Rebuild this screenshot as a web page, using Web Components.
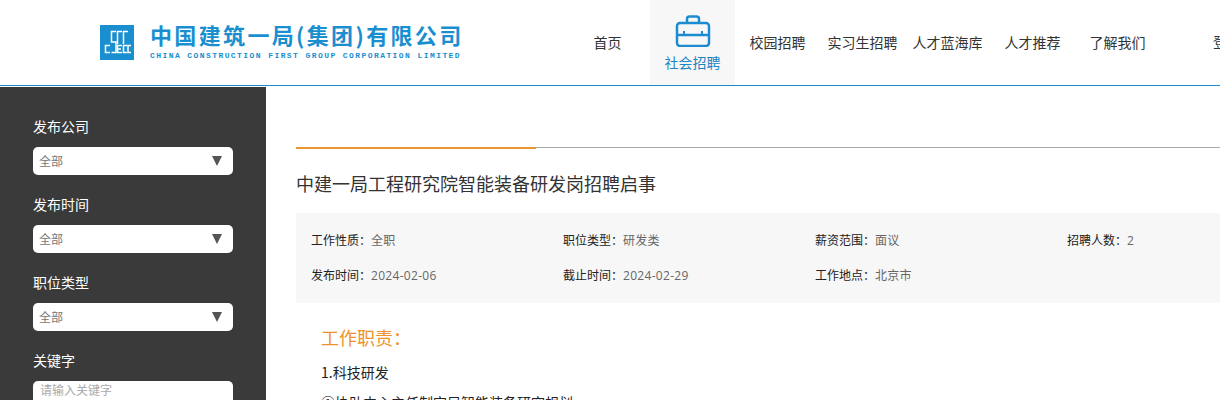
<!DOCTYPE html>
<html lang="zh">
<head>
<meta charset="utf-8">
<title>中建一局工程研究院智能装备研发岗招聘启事</title>
<style>
  html, body { margin: 0; height: 400px; overflow: hidden; background: #fff; }
  body { font-family: "Noto Sans CJK SC", "Liberation Sans", sans-serif; color: #333; }
</style>
</head>
<body>
<job-page>
  <site-header slot="header">
    <nav-item>首页</nav-item>
    <nav-item active>社会招聘</nav-item>
    <nav-item>校园招聘</nav-item>
    <nav-item>实习生招聘</nav-item>
    <nav-item>人才蓝海库</nav-item>
    <nav-item>人才推荐</nav-item>
    <nav-item>了解我们</nav-item>
    <span slot="login">登录</span>
  </site-header>
  <filter-bar slot="side">
    <filter-field label="发布公司" value="全部"></filter-field>
    <filter-field label="发布时间" value="全部"></filter-field>
    <filter-field label="职位类型" value="全部"></filter-field>
    <filter-field label="关键字" placeholder="请输入关键字"></filter-field>
  </filter-bar>
  <job-detail heading="中建一局工程研究院智能装备研发岗招聘启事">
    <info-item slot="info" label="工作性质">全职</info-item>
    <info-item slot="info" label="职位类型">研发类</info-item>
    <info-item slot="info" label="薪资范围">面议</info-item>
    <info-item slot="info" label="招聘人数">2</info-item>
    <info-item slot="info" label="发布时间">2024-02-06</info-item>
    <info-item slot="info" label="截止时间">2024-02-29</info-item>
    <info-item slot="info" label="工作地点">北京市</info-item>
    <h3 slot="section">工作职责：</h3>
    <p>1.科技研发</p>
    <p>①协助中心主任制定局智能装备研究规划</p>
  </job-detail>
</job-page>

<script>
class JobPage extends HTMLElement {
  constructor() {
    super();
    this.attachShadow({ mode: 'open' });
  }

  connectedCallback() {
    this.shadowRoot.innerHTML = `
      <style>
        :host { display: block; width: 1320px; }
        .body { display: flex; height: 313px; margin-top: 1px; overflow: hidden; }
      </style>
      <slot name="header"></slot>
      <div class="body">
        <slot name="side"></slot>
        <slot></slot>
      </div>
    `;
  }
}

class SiteHeader extends HTMLElement {
  constructor() {
    super();
    this.attachShadow({ mode: 'open' });
  }

  connectedCallback() {
    this.shadowRoot.innerHTML = `
      <style>
        :host {
          display: flex;
          height: 85px;
          border-bottom: 1px solid #1c8bc6;
          color: #333;
        }
        .logo {
          display: flex;
          align-items: flex-start;
          gap: 16px;
          width: 565px;
          padding-left: 100px;
          box-sizing: border-box;
          flex: none;
          color: #1a8fd0;
        }
        .logo svg { flex: none; margin-top: 25px; }
        .words { padding-top: 21px; }
        .name {
          font-size: 22px;
          font-weight: 700;
          line-height: 26px;
          letter-spacing: 2.35px;
          white-space: nowrap;
        }
        .name-en {
          font-family: "Liberation Mono", monospace;
          font-size: 8px;
          font-weight: 700;
          line-height: 10px;
          letter-spacing: 1.42px;
          white-space: nowrap;
          margin-top: 4px;
        }
        nav { display: flex; flex: none; }
        .login {
          font-size: 14px;
          line-height: 83px;
          margin-left: 53px;
          white-space: nowrap;
        }
      </style>
      <div class="logo">
        <svg width="34" height="35" viewBox="0 0 34 35">
          <rect width="34" height="35" fill="#1a8fd0"/>
          <g fill="none" stroke="#fff" stroke-width="1.5">
            <path d="M10 20.500H5.500v7H10"/>
            <path d="M16 6.500h-4.500V17H16v10.500h-4.500"/>
            <path d="M22 6.500h-4.500V19"/>
            <path d="M22 20.500h-4.500v7H22M17.500 24H21"/>
            <path d="M28 6.500h-4.500V19"/>
            <path d="M27 20.500h-3.500v7H27"/>
            <path d="M31 20.500h-3v7h3"/>
          </g>
        </svg>
        <div class="words">
          <div class="name">中国建筑一局(集团)有限公司</div>
          <div class="name-en">CHINA CONSTRUCTION FIRST GROUP CORPORATION LIMITED</div>
        </div>
      </div>
      <nav><slot></slot></nav>
      <div class="login"><slot name="login"></slot></div>
    `;
  }
}

class NavItem extends HTMLElement {
  constructor() {
    super();
    this.attachShadow({ mode: 'open' });
  }

  connectedCallback() {
    const active = this.hasAttribute('active');
    this.shadowRoot.innerHTML = `
      <style>
        :host {
          display: flex;
          flex-direction: column;
          align-items: center;
          justify-content: center;
          width: 85px;
          height: 85px;
          box-sizing: border-box;
          padding-bottom: 2px;
          font-size: 14px;
          white-space: nowrap;
          color: #333;
        }
        :host([active]) {
          justify-content: flex-start;
          padding-bottom: 0;
          background: #f7f7f7;
          color: #1c85c2;
        }
        svg { display: block; margin: 15px 0 5px; }
        .label { line-height: 20px; }
      </style>
      ${active ? `
        <svg width="36" height="32" viewBox="0 0 36 32" fill="none" stroke="#1c8bd0" stroke-width="2.500">
          <rect x="2" y="8" width="32" height="23" rx="3"/>
          <path d="M12 8V4a2.500 2.500 0 0 1 2.500-2.500h7A2.500 2.500 0 0 1 24 4v4"/>
          <path d="M2 20h32"/>
          <path d="M9 16v4M27 16v4" stroke-width="2"/>
        </svg>` : ''}
      <div class="label"><slot></slot></div>
    `;
  }
}

class FilterBar extends HTMLElement {
  constructor() {
    super();
    this.attachShadow({ mode: 'open' });
  }

  connectedCallback() {
    this.shadowRoot.innerHTML = `
      <style>
        :host {
          display: flex;
          flex-direction: column;
          gap: 19px;
          flex: none;
          width: 266px;
          height: 313px;
          box-sizing: border-box;
          padding: 29px 33px 0;
          background: #3a3a3a;
          overflow: hidden;
        }
      </style>
      <slot></slot>
    `;
  }
}

class FilterField extends HTMLElement {
  constructor() {
    super();
    this.attachShadow({ mode: 'open' });
  }

  connectedCallback() {
    const value = this.getAttribute('value');
    const placeholder = this.getAttribute('placeholder');
    this.shadowRoot.innerHTML = `
      <style>
        :host { display: block; color: #fff; font-size: 14px; }
        .label { line-height: 20px; margin-bottom: 11px; }
        .box {
          display: flex;
          align-items: center;
          justify-content: space-between;
          height: 28px;
          box-sizing: border-box;
          padding: 0 11px 0 6px;
          background: #fff;
          border-radius: 5px;
          font-size: 12px;
          color: #777;
        }
        .box > span:first-child { margin-bottom: 2px; }
        .placeholder {
          align-items: flex-start;
          padding: 0 7px;
          line-height: 18px;
          color: #aaa;
        }
        .arrow {
          width: 0;
          height: 0;
          border-left: 5.500px solid transparent;
          border-right: 5.500px solid transparent;
          border-top: 10px solid #555;
        }
      </style>
      <div class="label">${this.getAttribute('label')}</div>
      ${placeholder
        ? `<div class="box placeholder">${placeholder}</div>`
        : `<div class="box"><span>${value}</span><span class="arrow"></span></div>`}
    `;
  }
}

class JobDetail extends HTMLElement {
  constructor() {
    super();
    this.attachShadow({ mode: 'open' });
  }

  connectedCallback() {
    this.shadowRoot.innerHTML = `
      <style>
        :host {
          display: block;
          flex: 1;
          padding: 60px 0 0 30px;
          min-width: 0;
        }
        .rule { height: 1px; background: #aaa; margin-bottom: 20px; }
        .rule::before {
          content: "";
          display: block;
          width: 240px;
          height: 2px;
          background: #e9962f;
        }
        h1 {
          margin: 0 0 15px;
          font-size: 18px;
          font-weight: 400;
          line-height: 30px;
          color: #333;
        }
        .info {
          display: grid;
          grid-template-columns: repeat(4, 252px);
          grid-auto-rows: 35px;
          align-items: center;
          height: 90px;
          box-sizing: border-box;
          padding: 10px 15px;
          background: #f7f7f7;
        }
        .text {
          padding: 19px 25px 0;
          font-size: 14px;
          color: #222;
        }
        ::slotted(h3) {
          margin: 0 0 10px;
          font-size: 18px;
          font-weight: 400;
          line-height: 30px;
          color: #f0922b;
        }
        ::slotted(p) { margin: 0 0 10px; line-height: 20px; }
      </style>
      <div class="rule"></div>
      <h1>${this.getAttribute('heading')}</h1>
      <div class="info"><slot name="info"></slot></div>
      <div class="text">
        <slot name="section"></slot>
        <slot></slot>
      </div>
    `;
  }
}

class InfoItem extends HTMLElement {
  constructor() {
    super();
    this.attachShadow({ mode: 'open' });
  }

  connectedCallback() {
    this.shadowRoot.innerHTML = `
      <style>
        :host {
          display: block;
          font-family: "Open Sans", "Noto Sans CJK SC", sans-serif;
          font-size: 12px;
          line-height: 20px;
          color: #666;
          white-space: nowrap;
        }
        .label { color: #222; }
        .value { letter-spacing: 0.3px; }
      </style>
      <span class="label">${this.getAttribute('label')}：</span><span class="value"><slot></slot></span>
    `;
  }
}

customElements.define('job-page', JobPage);
customElements.define('site-header', SiteHeader);
customElements.define('nav-item', NavItem);
customElements.define('filter-bar', FilterBar);
customElements.define('filter-field', FilterField);
customElements.define('job-detail', JobDetail);
customElements.define('info-item', InfoItem);
</script>
</body>
</html>
